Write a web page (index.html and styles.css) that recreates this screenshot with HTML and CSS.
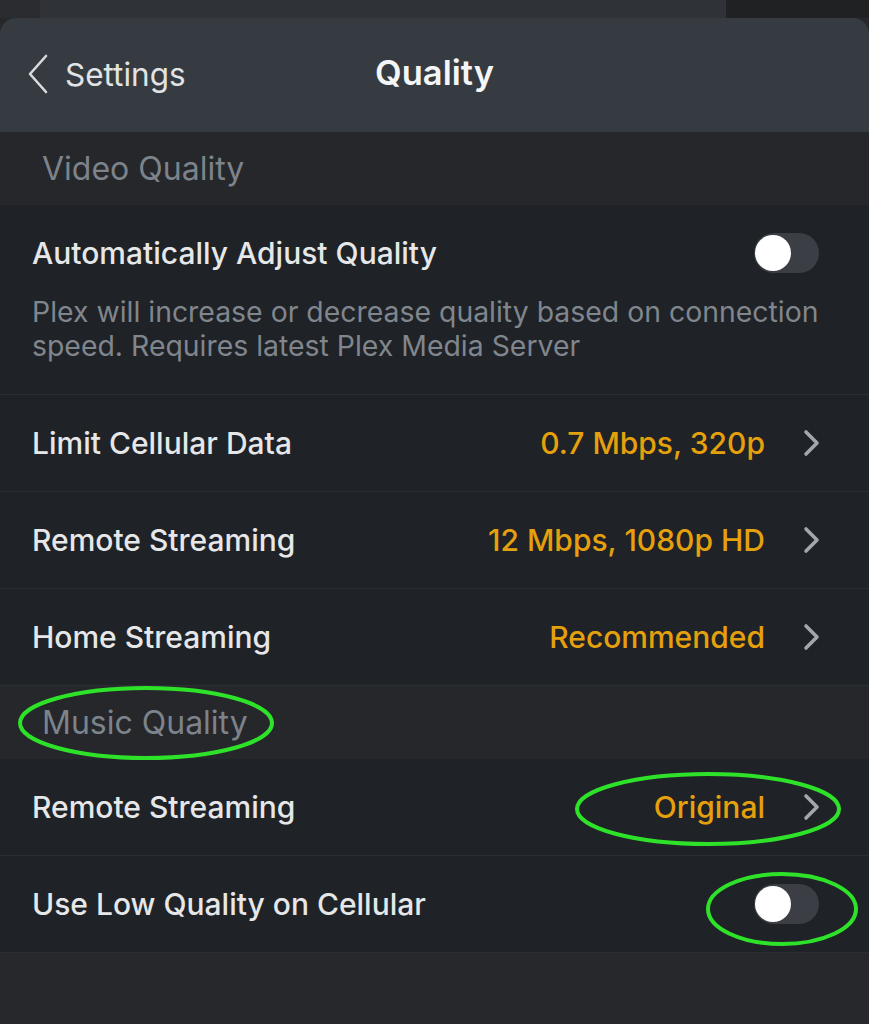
FILE: index.html
```html
<!DOCTYPE html>
<html lang="en">
<head>
    <meta charset="UTF-8">
    <meta name="viewport" content="width=device-width, initial-scale=1.0">
    <title>Quality</title>
    <link rel="stylesheet" href="styles.css">
</head>
<body>
    <!-- Sheet behind the modal -->
    <div class="backdrop">
        <div class="bd-left"></div>
        <div class="bd-mid"></div>
        <div class="bd-right"></div>
    </div>

    <div class="sheet">
        <!-- Navigation Bar -->
        <div class="nav-bar">
            <div class="back">
                <svg class="back-icon" width="22" height="40" viewBox="0 0 22 40">
                    <path d="M19 2 L3 20 L19 38" fill="none" stroke="#d8dadd" stroke-width="2.6" stroke-linecap="round" stroke-linejoin="round"/>
                </svg>
                <span>Settings</span>
            </div>
            <h1 class="title">Quality</h1>
        </div>

        <!-- Video Quality -->
        <div class="section-header video">Video Quality</div>

        <div class="row row-tall">
            <div class="row-main">
                <span class="label">Automatically Adjust Quality</span>
                <div class="toggle"><div class="knob"></div></div>
            </div>
            <p class="desc">Plex will increase or decrease quality based on connection speed. Requires latest Plex Media Server</p>
        </div>

        <div class="row">
            <span class="label">Limit Cellular Data</span>
            <div class="value">
                <span>0.7 Mbps, 320p</span>
                <svg class="chevron" width="18" height="28" viewBox="0 0 18 28"><path d="M3 3 L14 14 L3 25" fill="none" stroke="#a3a7ad" stroke-width="3.6" stroke-linecap="round" stroke-linejoin="round"/></svg>
            </div>
        </div>

        <div class="row">
            <span class="label">Remote Streaming</span>
            <div class="value">
                <span>12 Mbps, 1080p HD</span>
                <svg class="chevron" width="18" height="28" viewBox="0 0 18 28"><path d="M3 3 L14 14 L3 25" fill="none" stroke="#a3a7ad" stroke-width="3.6" stroke-linecap="round" stroke-linejoin="round"/></svg>
            </div>
        </div>

        <div class="row">
            <span class="label">Home Streaming</span>
            <div class="value">
                <span>Recommended</span>
                <svg class="chevron" width="18" height="28" viewBox="0 0 18 28"><path d="M3 3 L14 14 L3 25" fill="none" stroke="#a3a7ad" stroke-width="3.6" stroke-linecap="round" stroke-linejoin="round"/></svg>
            </div>
        </div>

        <!-- Music Quality -->
        <div class="section-header music">Music Quality</div>

        <div class="row">
            <span class="label">Remote Streaming</span>
            <div class="value">
                <span>Original</span>
                <svg class="chevron" width="18" height="28" viewBox="0 0 18 28"><path d="M3 3 L14 14 L3 25" fill="none" stroke="#a3a7ad" stroke-width="3.6" stroke-linecap="round" stroke-linejoin="round"/></svg>
            </div>
        </div>

        <div class="row">
            <span class="label">Use Low Quality on Cellular</span>
            <div class="toggle"><div class="knob"></div></div>
        </div>

        <div class="footer-space"></div>
    </div>

    <!-- Green annotation marks -->
    <svg class="marks" width="869" height="1024" viewBox="0 0 869 1024">
        <ellipse cx="146" cy="723" rx="126" ry="35" fill="none" stroke="#2ee22a" stroke-width="4"/>
        <ellipse cx="708" cy="809" rx="131" ry="35" fill="none" stroke="#2ee22a" stroke-width="4"/>
        <ellipse cx="782" cy="909" rx="74" ry="35" fill="none" stroke="#2ee22a" stroke-width="4"/>
    </svg>
</body>
</html>
```

FILE: styles.css
```css
body {
    margin: 0;
    background-color: #26282c;
    font-family: Inter, "Noto Sans", sans-serif;
    color: #e6e7e9;
    position: relative;
    width: 869px;
    height: 1024px;
    overflow: hidden;
}
.backdrop {
    display: flex;
    height: 18px;
}
.bd-left {
    width: 40px;
    background: #2a2c30;
}
.bd-mid {
    width: 686px;
    background: #2f3236;
}
.bd-right {
    flex: 1;
    background: #202123;
}
.sheet {
    background: #26282c;
    border-radius: 16px 16px 0 0;
    overflow: hidden;
    height: 1006px;
}
.nav-bar {
    height: 114px;
    background: #363b41;
    display: flex;
    align-items: center;
    justify-content: center;
    position: relative;
}
.back {
    position: absolute;
    left: 27px;
    top: 36px;
    display: flex;
    align-items: center;
    gap: 16px;
    font-size: 31.5px;
    color: #e2e3e5;
}
.title {
    margin: 0;
    font-size: 34.5px;
    font-weight: 600;
    color: #f4f5f6;
    margin-top: -6px;
}
.section-header {
    background: #25272b;
    color: #7d838b;
    font-size: 32px;
    padding-left: 42px;
    display: flex;
    align-items: center;
}
.section-header.video {
    height: 73px;
}
.section-header.music {
    height: 73px;
}
.row {
    background: #1f2226;
    height: 97px;
    border-bottom: 1px solid #2b2e32;
    display: flex;
    align-items: center;
    justify-content: space-between;
    padding: 0 50px 0 32px;
    box-sizing: border-box;
    font-size: 30px;
    font-weight: 500;
}
.row-tall {
    height: 190px;
    display: block;
    padding-top: 30px;
}
.row-main {
    display: flex;
    align-items: center;
    justify-content: space-between;
    height: 36px;
}
.label {
    color: #e6e7e9;
}
.desc {
    margin: 24px -45px 0 0;
    font-size: 28.4px;
    font-weight: 400;
    line-height: 34px;
    color: #80868d;
}
.value {
    display: flex;
    align-items: center;
    gap: 38px;
    color: #e5a00d;
}
.chevron {
    display: block;
    margin-right: -2px;
}
.toggle {
    width: 65px;
    height: 40px;
    border-radius: 20px;
    background: #3b3e44;
    position: relative;
}
.knob {
    position: absolute;
    left: 1px;
    top: 2px;
    width: 36px;
    height: 36px;
    border-radius: 50%;
    background: #ffffff;
}
.footer-space {
    background: #26282c;
}
.marks {
    position: absolute;
    left: 0;
    top: 0;
    pointer-events: none;
}
```
